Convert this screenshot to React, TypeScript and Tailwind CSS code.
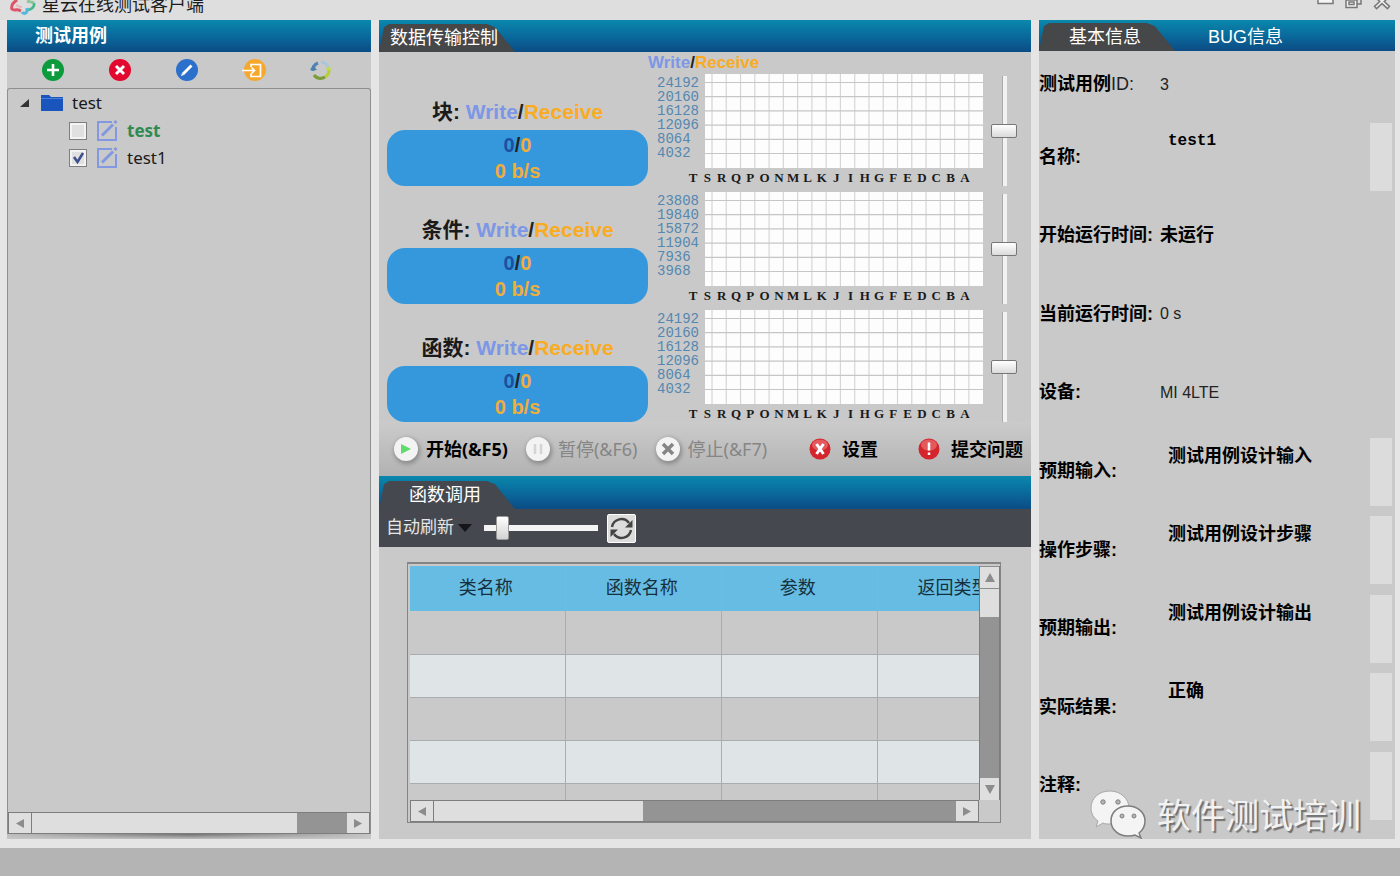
import React from "react";

const TAB_SHAPE =
  "[clip-path:polygon(0_100%,5px_12%,10px_0,108px_0,116px_12%,136px_100%)]";
const BAR = "bg-linear-to-b from-[#0a88ac] via-[#0a6a9c] to-[#0b4c84]";

function AppLogo() {
  return (
    <svg width="28" height="16" viewBox="0 0 28 16" fill="none" aria-hidden="true">
      <path d="M8 0C6 2 3 3 3 6C2 9 3 10 6 10C9 9 10 10 12 11" stroke="#dc5468" strokeWidth="3" />
      <path d="M7 5c2 1 3 2 6 2" stroke="#efb3ba" strokeWidth="2" />
      <path d="M18 1c3 1 5 1 7 2" stroke="#8fc79a" strokeWidth="3" />
      <path d="M25 3C26 7 22 10 18 10" stroke="#48b58c" strokeWidth="2.500" />
      <path d="M13 12c2 3 6 1 5-4" stroke="#53b8de" strokeWidth="3" />
    </svg>
  );
}

function TitleBar() {
  return (
    <header className="flex h-5 items-start justify-between overflow-hidden bg-[#dedede] pl-[9px] pr-2">
      <div className="flex items-start gap-[5px]">
        <AppLogo />
        <h1 className="text-[18px] leading-[10px] text-[#1c1c1c]">星云在线测试客户端</h1>
      </div>
      <div className="flex items-start gap-2">
        <button aria-label="最小化" className="h-3">
          <svg width="20" height="12" viewBox="0 0 20 12" fill="none">
            <path d="M2-2v5.500h15V-2" fill="#f4f4f4" stroke="#777" strokeWidth="1.500" />
          </svg>
        </button>
        <button aria-label="还原" className="h-3">
          <svg width="20" height="12" viewBox="0 0 20 12" fill="none" stroke="#777" strokeWidth="1.500">
            <path d="M6-3h11V4h-4" />
            <path d="M2 0h11v7.500H2z" fill="#f0f0f0" />
            <path d="M5 2h5v2.500H5z" />
          </svg>
        </button>
        <button aria-label="关闭" className="h-3">
          <svg width="20" height="12" viewBox="0 0 20 12" fill="none">
            <path d="M3-5L17 8M17-5L3 8" stroke="#777" strokeWidth="4.500" />
            <path d="M4-4L16 7M16-4L4 7" stroke="#eee" strokeWidth="1.600" />
          </svg>
        </button>
      </div>
    </header>
  );
}

function Arrow({ dir }: { dir: "left" | "right" | "up" | "down" }) {
  const d = {
    left: "M9 1L1 5.500L9 10Z",
    right: "M1 1L9 5.500L1 10Z",
    up: "M0 10L5 1L10 10Z",
    down: "M0 1L5 10L10 1Z",
  }[dir];
  return (
    <svg width="10" height="11" viewBox="0 0 10 11" fill="#8c8c8c" aria-hidden="true">
      <path d={d} />
    </svg>
  );
}

function HScroll({ thumb }: { thumb: string }) {
  return (
    <div className="flex h-[22px] border border-[#7d7d7d] bg-[#949494]">
      <button aria-label="向左滚动" className="grid w-[23px] place-items-center border-r border-[#7d7d7d] bg-[#dfdfdf]">
        <Arrow dir="left" />
      </button>
      <div className="flex-1">
        <div className={`h-full bg-[#dedede] ${thumb}`} />
      </div>
      <button aria-label="向右滚动" className="grid w-[22px] place-items-center bg-[#dfdfdf]">
        <Arrow dir="right" />
      </button>
    </div>
  );
}

function CaseToolbar() {
  return (
    <div className="grid h-9 grid-cols-5 items-center justify-items-center pl-3 pr-4">
      <button aria-label="添加">
        <svg width="22" height="22" viewBox="0 0 22 22">
          <circle cx="11" cy="11" r="11" fill="#0b9b3c" />
          <path d="M11 5v12M5 11h12" stroke="#fff" strokeWidth="2.600" />
        </svg>
      </button>
      <button aria-label="删除">
        <svg width="22" height="22" viewBox="0 0 22 22">
          <circle cx="11" cy="11" r="11" fill="#e3082f" />
          <path d="M7 7l8 8M15 7l-8 8" stroke="#fff" strokeWidth="3" />
        </svg>
      </button>
      <button aria-label="编辑">
        <svg width="22" height="22" viewBox="0 0 22 22">
          <circle cx="11" cy="11" r="11" fill="#2b70cb" />
          <path d="M7 15L15.500 6.500" stroke="#fff" strokeWidth="2.800" />
          <path d="M5 17l1-3 2 2z" fill="#fff" />
        </svg>
      </button>
      <button aria-label="导入">
        <svg width="24" height="22" viewBox="0 0 24 22" fill="none">
          <circle cx="13" cy="11" r="11" fill="#f6a82c" />
          <path d="M9 8V5.500h9.500v12H9v-3" stroke="#fff" strokeWidth="1.700" />
          <path d="M0 11.500h12M9.500 8.500l3 3-3 3" stroke="#fff" strokeWidth="1.700" />
        </svg>
      </button>
      <button aria-label="刷新">
        <svg width="24" height="24" viewBox="0 0 24 24" fill="none" strokeWidth="3.200">
          <path d="M4 13a8 8 0 0 1 5-8" stroke="#4f86b8" />
          <path d="M12 4a8 8 0 0 1 7 5" stroke="#a9c6dc" />
          <path d="M20 12a8 8 0 0 1-4 7" stroke="#b8cf3c" />
          <path d="M16 19a8 8 0 0 1-11-2" stroke="#7c9c38" />
          <path d="M1 12l3-5 4 5z" fill="#4d7fae" />
          <path d="M16 12h7l-3-4z" fill="#c6d85c" />
        </svg>
      </button>
    </div>
  );
}

function NoteIcon() {
  return (
    <svg width="22" height="22" viewBox="0 0 22 22" fill="none" aria-hidden="true">
      <path d="M16 2H2v18h18V7" stroke="#8298e0" strokeWidth="2" />
      <path d="M6 15.500L17 4.500" stroke="#8298e0" strokeWidth="3" />
      <path d="M18.500 3l2-2" stroke="#8298e0" strokeWidth="3" />
    </svg>
  );
}

function CaseRow({ id, name, checked }: { id: string; name: string; checked: boolean }) {
  return (
    <li className="flex h-[27px] items-center pl-[61px]">
      <span className="relative flex">
        <input
          id={id}
          type="checkbox"
          defaultChecked={checked}
          className="peer size-[18px] appearance-none border border-[#7f7f7f] bg-[#e0e0e0] shadow-[inset_0_0_0_2px_#f3f3f3]"
        />
        <svg
          className="pointer-events-none absolute inset-0 hidden peer-checked:block"
          width="18"
          height="18"
          viewBox="0 0 18 18"
          fill="none"
          aria-hidden="true"
        >
          <path d="M5 8l3.500 5L14 4" stroke="#3e4f8c" strokeWidth="2.500" />
        </svg>
      </span>
      <span className="ml-[9px]">
        <NoteIcon />
      </span>
      <label
        htmlFor={id}
        className={`ml-[9px] font-['Noto_Sans','Noto_Sans_CJK_SC',sans-serif] text-[17px] leading-[27px] ${
          checked ? "text-[#1a1a1a]" : "font-bold text-[#2f8a52]"
        }`}
      >
        {name}
      </label>
    </li>
  );
}

function CasePanel() {
  return (
    <section className="flex flex-col bg-[#c9c9c9]">
      <h2 className={`h-8 pl-7 text-[18px] font-bold leading-8 text-white ${BAR}`}>测试用例</h2>
      <CaseToolbar />
      <div className="flex flex-1 flex-col rounded-t-[3px] border border-b-0 border-[#8f8f8f]">
        <ul className="flex-1">
          <li>
            <div className="flex h-7 items-center pl-3">
              <button aria-label="折叠" className="flex">
                <svg width="10" height="10" viewBox="0 0 10 10">
                  <path d="M9 1v8H0z" fill="#333" />
                </svg>
              </button>
              <svg className="ml-[10px]" width="24" height="18" viewBox="0 0 24 18" aria-hidden="true">
                <path d="M1 1h8l2 2h12v14H1z" fill="#1a55bd" />
                <path d="M1 4.500h22" stroke="#4b80d8" />
              </svg>
              <span className="ml-2 font-['Noto_Sans','Noto_Sans_CJK_SC',sans-serif] text-[17px] text-[#1a1a1a]">
                test
              </span>
            </div>
            <ul>
              <CaseRow id="case-1" name="test" checked={false} />
              <CaseRow id="case-2" name="test1" checked />
            </ul>
          </li>
        </ul>
        <HScroll thumb="w-[84%]" />
      </div>
      <div className="h-[5px] bg-linear-to-r from-[#bdbdbd] via-[#6f6f6f] to-[#c4c4c4] [mask-image:linear-gradient(to_bottom,#000,#0002)]" />
    </section>
  );
}

function WriteReceive() {
  return (
    <>
      <span className="text-[#7d97e6]">Write</span>
      <span className="text-[#222]">/</span>
      <span className="text-[#f9ab22]">Receive</span>
    </>
  );
}

const LETTERS = "TSRQPONMLKJIHGFEDCBA".split("");
const METERS = [
  { name: "块", scale: ["24192", "20160", "16128", "12096", "8064", "4032"] },
  { name: "条件", scale: ["23808", "19840", "15872", "11904", "7936", "3968"] },
  { name: "函数", scale: ["24192", "20160", "16128", "12096", "8064", "4032"] },
];

function ChartGrid() {
  return (
    <svg
      className="block h-[94px] w-full bg-[#fdfdfd]"
      viewBox="0 0 278 94"
      preserveAspectRatio="none"
      stroke="#d6d6d6"
      strokeWidth="1.200"
      aria-hidden="true"
    >
      {LETTERS.slice(1).map((l, i) => (
        <path key={l} d={`M${7 + i * 14.27} 0V94`} />
      ))}
      {[0, 1, 2, 3, 4, 5].map((i) => (
        <path key={i} d={`M0 ${8.5 + i * 14.2}H278`} stroke="#c6c6c6" />
      ))}
    </svg>
  );
}

function Meter({ name, scale }: { name: string; scale: string[] }) {
  return (
    <div className="flex h-[114px] pl-2 pr-[14px]">
      <div className="flex w-[261px] flex-col pt-[27px] text-center font-bold">
        <h3 className="text-[21px] leading-[26px]">
          <span className="text-[#1a1a1a]">{name}: </span>
          <WriteReceive />
        </h3>
        <div className="mt-[5px] h-14 rounded-[18px] bg-[#3598dc] pt-[2px] text-[20px] leading-[26px] text-[#f0ad3c]">
          <p>
            <span className="text-[#1d4fa3]">0</span>
            <span className="text-[#222]">/</span>0
          </p>
          <p>0 b/s</p>
        </div>
      </div>
      <ol className="ml-[9px] w-12 pt-1 font-['Liberation_Mono',monospace] text-[14px] leading-[14px] text-[#5587b0]">
        {scale.map((v) => (
          <li key={v}>{v}</li>
        ))}
      </ol>
      <div className="flex-1 pt-[2px]">
        <ChartGrid />
        <div className="-ml-[19px] mr-[11px] grid grid-cols-20 justify-items-center font-['Liberation_Serif',serif] text-[13px] font-bold leading-[19px] text-[#1a1a1a]">
          {LETTERS.map((l) => (
            <span key={l}>{l}</span>
          ))}
        </div>
      </div>
      <input
        type="range"
        aria-label={`${name}缩放`}
        defaultValue={50}
        className="ml-2 mt-1 h-[110px] w-[26px] appearance-none bg-[linear-gradient(to_right,#aaa_1px,#f2f2f2_1px)] bg-[length:5px_100%] bg-center bg-no-repeat [writing-mode:vertical-lr] [&::-webkit-slider-thumb]:h-[14px] [&::-webkit-slider-thumb]:w-[26px] [&::-webkit-slider-thumb]:appearance-none [&::-webkit-slider-thumb]:rounded-[2px] [&::-webkit-slider-thumb]:border [&::-webkit-slider-thumb]:border-[#777] [&::-webkit-slider-thumb]:bg-linear-to-b [&::-webkit-slider-thumb]:from-white [&::-webkit-slider-thumb]:to-[#dadada]"
      />
    </div>
  );
}

function Disc({ children }: { children: React.ReactNode }) {
  return (
    <span className="grid size-6 place-items-center rounded-full bg-[#f3f3f3] shadow-[1px_2px_4px_1px_#8a8a8a]">
      <svg width="14" height="14" viewBox="0 0 14 14" fill="none" aria-hidden="true">
        {children}
      </svg>
    </span>
  );
}

function RedBall({ children }: { children: React.ReactNode }) {
  return (
    <svg width="22" height="22" viewBox="0 0 22 22" fill="none" aria-hidden="true">
      <circle cx="11" cy="11" r="10.500" fill="#d4242c" />
      <ellipse cx="11" cy="7" rx="8" ry="5.500" fill="#ee7d7d" opacity=".6" />
      {children}
    </svg>
  );
}

const CMD = "flex items-center whitespace-nowrap";

function CommandBar() {
  return (
    <div className="flex h-[54px] items-center justify-between bg-linear-to-b from-[#cbcbcb] to-[#b2b2b2] pl-[15px] pr-2 font-['Noto_Sans','Noto_Sans_CJK_SC',sans-serif] text-[18px] leading-6">
      <div className="flex gap-[18px]">
        <button className={`${CMD} gap-2 font-bold text-black`}>
          <Disc>
            <path d="M2 2l10 5-10 5z" fill="#5fdc6c" />
          </Disc>
          开始(&amp;F5)
        </button>
        <button disabled className={`${CMD} gap-2 text-[#858585]`}>
          <Disc>
            <path d="M4 2v10M10 2v10" stroke="#d4d4d4" strokeWidth="2.500" />
          </Disc>
          暂停(&amp;F6)
        </button>
        <button disabled className={`${CMD} gap-2 text-[#858585]`}>
          <Disc>
            <path d="M2 2l10 10M12 2L2 12" stroke="#858585" strokeWidth="3.500" />
          </Disc>
          停止(&amp;F7)
        </button>
      </div>
      <div className="flex gap-10 font-bold text-black">
        <button className={`${CMD} gap-[11px]`}>
          <RedBall>
            <path d="M7.500 6l7 10M14.500 6l-7 10" stroke="#fff" strokeWidth="3" />
          </RedBall>
          设置
        </button>
        <button className={`${CMD} gap-[11px]`}>
          <RedBall>
            <path d="M11 4.500v8M11 14.500v2.500" stroke="#fff" strokeWidth="2.500" />
          </RedBall>
          提交问题
        </button>
      </div>
    </div>
  );
}

function CallBar() {
  return (
    <div className="flex h-[38px] items-center bg-[#45484f] pl-[7px] text-white">
      <div className="relative flex items-center">
        <select
          aria-label="刷新方式"
          className="w-[86px] appearance-none bg-transparent text-[17px] leading-6 text-[#e6e6e6]"
        >
          <option>自动刷新</option>
        </select>
        <svg className="pointer-events-none absolute right-0" width="14" height="8" viewBox="0 0 14 8" aria-hidden="true">
          <path d="M0 0h14L7 8z" fill="#14161a" />
        </svg>
      </div>
      <input
        type="range"
        aria-label="刷新间隔"
        defaultValue={12}
        className="ml-3 h-6 w-[114px] appearance-none bg-[linear-gradient(#f4f4f4,#f4f4f4)] bg-[length:100%_6px] bg-center bg-no-repeat [&::-webkit-slider-thumb]:h-6 [&::-webkit-slider-thumb]:w-[13px] [&::-webkit-slider-thumb]:appearance-none [&::-webkit-slider-thumb]:rounded-[2px] [&::-webkit-slider-thumb]:border [&::-webkit-slider-thumb]:border-[#999] [&::-webkit-slider-thumb]:bg-linear-to-b [&::-webkit-slider-thumb]:from-white [&::-webkit-slider-thumb]:to-[#d2d2d2]"
      />
      <button aria-label="立即刷新" className="ml-[9px] grid size-[29px] place-items-center rounded-[2px] border border-white bg-[#dcdcdc]">
        <svg width="25" height="25" viewBox="0 0 25 25" fill="none" aria-hidden="true">
          <path d="M3 11A9.500 9.500 0 0 1 20 7" stroke="#444" strokeWidth="2.400" />
          <path d="M22 14A9.500 9.500 0 0 1 5 18" stroke="#444" strokeWidth="2.400" />
          <path d="M23.500 4v7.500h-7.500z" fill="#444" />
          <path d="M1.500 21v-7.500h7.500z" fill="#444" />
        </svg>
      </button>
    </div>
  );
}

const COLUMNS = ["类名称", "函数名称", "参数", "返回类型"];

function CallTable() {
  return (
    <div className="ml-7 mr-[30px] mt-[15px] mb-4 flex grow flex-col border border-t-2 border-[#858585] bg-[#c9c9c9] pl-[2px] pt-[2px]">
      <div className="flex grow">
        <div className="h-[234px] min-w-0 grow basis-0 overflow-hidden">
          <table className="w-[624px] table-fixed border-collapse text-[18px]">
            <thead>
              <tr className="h-[45px] bg-[#67bce3] text-[#16303e]">
                {COLUMNS.map((c) => (
                  <th key={c} className="border-r border-[#80b6d0] p-0 pr-1 font-normal">
                    {c}
                  </th>
                ))}
              </tr>
            </thead>
            <tbody>
              {[0, 1, 2, 3, 4].map((r) => (
                <tr key={r} className="h-[43px] even:bg-[#dfe4e6]">
                  {COLUMNS.map((c) => (
                    <td key={c} className="border-b border-r border-[#a9adaf]" />
                  ))}
                </tr>
              ))}
            </tbody>
          </table>
        </div>
        <div className="flex w-[21px] flex-col border-x border-[#7d7d7d] bg-[#949494]">
          <button aria-label="向上滚动" className="grid h-[23px] place-items-center border-y border-[#8d8d8d] bg-[#dfdfdf]">
            <Arrow dir="up" />
          </button>
          <div className="h-7 bg-[#dedede]" />
          <button aria-label="向下滚动" className="mt-auto grid h-[22px] place-items-center bg-[#dfdfdf]">
            <Arrow dir="down" />
          </button>
        </div>
      </div>
      <div className="flex">
        <div className="grow">
          <HScroll thumb="w-[40%]" />
        </div>
        <div className="w-[21px]" />
      </div>
    </div>
  );
}

function CenterPanel() {
  return (
    <section className="flex flex-col bg-[#c9c9c9]">
      <div className={`flex h-8 items-end ${BAR}`}>
        <h2 className={`h-7 w-[136px] bg-[#464748] pl-[11px] text-[18px] leading-7 text-white ${TAB_SHAPE}`}>
          数据传输控制
        </h2>
      </div>
      <div className="h-5 pl-[269px] text-[17px] font-bold leading-[22px]">
        <WriteReceive />
      </div>
      <div className="flex flex-col gap-1">
        {METERS.map((m) => (
          <Meter key={m.name} {...m} />
        ))}
      </div>
      <CommandBar />
      <div className={`flex h-[33px] items-end ${BAR}`}>
        <h2 className={`h-7 w-[136px] bg-[#45484f] pl-[30px] text-[18px] leading-7 text-white ${TAB_SHAPE}`}>
          函数调用
        </h2>
      </div>
      <CallBar />
      <CallTable />
    </section>
  );
}

type Field = { cjk: string; value: string; area?: boolean; bold?: boolean; mono?: boolean };
const FIELDS: Field[] = [
  { cjk: "名称", value: "test1", area: true, mono: true },
  { cjk: "开始运行时间", value: "未运行", bold: true },
  { cjk: "当前运行时间", value: "0 s" },
  { cjk: "设备", value: "MI 4LTE" },
  { cjk: "预期输入", value: "测试用例设计输入", area: true },
  { cjk: "操作步骤", value: "测试用例设计步骤", area: true },
  { cjk: "预期输出", value: "测试用例设计输出", area: true },
  { cjk: "实际结果", value: "正确", area: true },
  { cjk: "注释", value: "", area: true },
];

function FieldRow({ f, index }: { f: Field; index: number }) {
  const id = `field-${index}`;
  return (
    <div className="flex flex-1 items-center">
      <label htmlFor={id} className="w-[121px] shrink-0 whitespace-nowrap text-[18px] font-bold text-black">
        {f.cjk}:
      </label>
      {f.area ? (
        <div className="flex h-[68px] min-w-0 grow pr-[3px]">
          <textarea
            id={id}
            defaultValue={f.value}
            className={`w-0 grow resize-none overflow-hidden bg-transparent pl-2 pt-[6px] font-bold leading-6 text-black outline-none ${
              f.mono ? "font-['Liberation_Mono',monospace] text-[16px]" : "text-[18px]"
            }`}
          />
          <div className="w-[22px] shrink-0 bg-[#dcdcdc]" />
        </div>
      ) : (
        <output id={id} className={f.bold ? "text-[18px] font-bold text-black" : "text-[16px] text-[#222]"}>
          {f.value}
        </output>
      )}
    </div>
  );
}

function Watermark() {
  return (
    <div className="pointer-events-none absolute bottom-0 right-[34px] flex items-end gap-[10px]">
      <svg width="58" height="50" viewBox="0 0 58 50" aria-hidden="true">
        <path
          d="M21 2C10 2 2 9 2 19c0 6 3 10 7 13l-2 6 7-4c2 1 4 1 7 1 11 0 19-7 19-16S32 2 21 2z"
          fill="#f4f4f4"
          stroke="#a8a8a8"
        />
        <path
          d="M39 17c-10 0-17 6-17 15s8 15 17 15c3 0 5 0 7-1l6 3-2-5c4-3 6-7 6-12 0-9-8-15-17-15z"
          fill="#f4f4f4"
          stroke="#7e7e7e"
          strokeWidth="1.500"
        />
        <g fill="#b5b5b5" stroke="#808080">
          <circle cx="14" cy="13" r="2.200" />
          <circle cx="29" cy="13" r="2.200" />
          <circle cx="33" cy="27" r="2" />
          <circle cx="45" cy="27" r="2" />
        </g>
      </svg>
      <span className="whitespace-nowrap text-[34px] leading-[46px] text-[#f2f2f2] [text-shadow:2px_2px_1px_#707070]">
        软件测试培训
      </span>
    </div>
  );
}

function InfoPanel() {
  return (
    <section className="relative flex flex-col bg-[#c9c9c9]">
      <div role="tablist" className={`flex h-[31px] items-end text-[18px] leading-7 text-white ${BAR}`}>
        <button role="tab" aria-selected="true" className={`h-7 w-[136px] bg-[#464748] pl-[30px] text-left ${TAB_SHAPE}`}>
          基本信息
        </button>
        <button role="tab" aria-selected="false" className="ml-[33px] h-7">
          BUG信息
        </button>
      </div>
      <div className="flex h-[67px] items-center">
        <span className="w-[121px] shrink-0 whitespace-nowrap text-[18px] font-bold text-black">
          测试用例<span className="font-normal text-[#222]">ID:</span>
        </span>
        <span className="text-[16px] text-[#222]">3</span>
      </div>
      <div className="flex flex-1 flex-col pb-[14px]">
        {FIELDS.map((f, i) => (
          <FieldRow key={f.cjk} f={f} index={i} />
        ))}
      </div>
      <Watermark />
    </section>
  );
}

export default function App() {
  return (
    <div className="flex min-h-screen flex-col bg-[#e5e5e5] font-['Liberation_Sans','Noto_Sans_CJK_SC',sans-serif] text-[#1a1a1a]">
      <TitleBar />
      <main className="grid flex-1 grid-cols-[minmax(0,364fr)_minmax(0,652fr)_minmax(0,356fr)] gap-2 pl-[7px] pr-[5px]">
        <CasePanel />
        <CenterPanel />
        <InfoPanel />
      </main>
      <footer className="mt-[9px] h-[29px] bg-[#b4b4b4]" />
    </div>
  );
}
